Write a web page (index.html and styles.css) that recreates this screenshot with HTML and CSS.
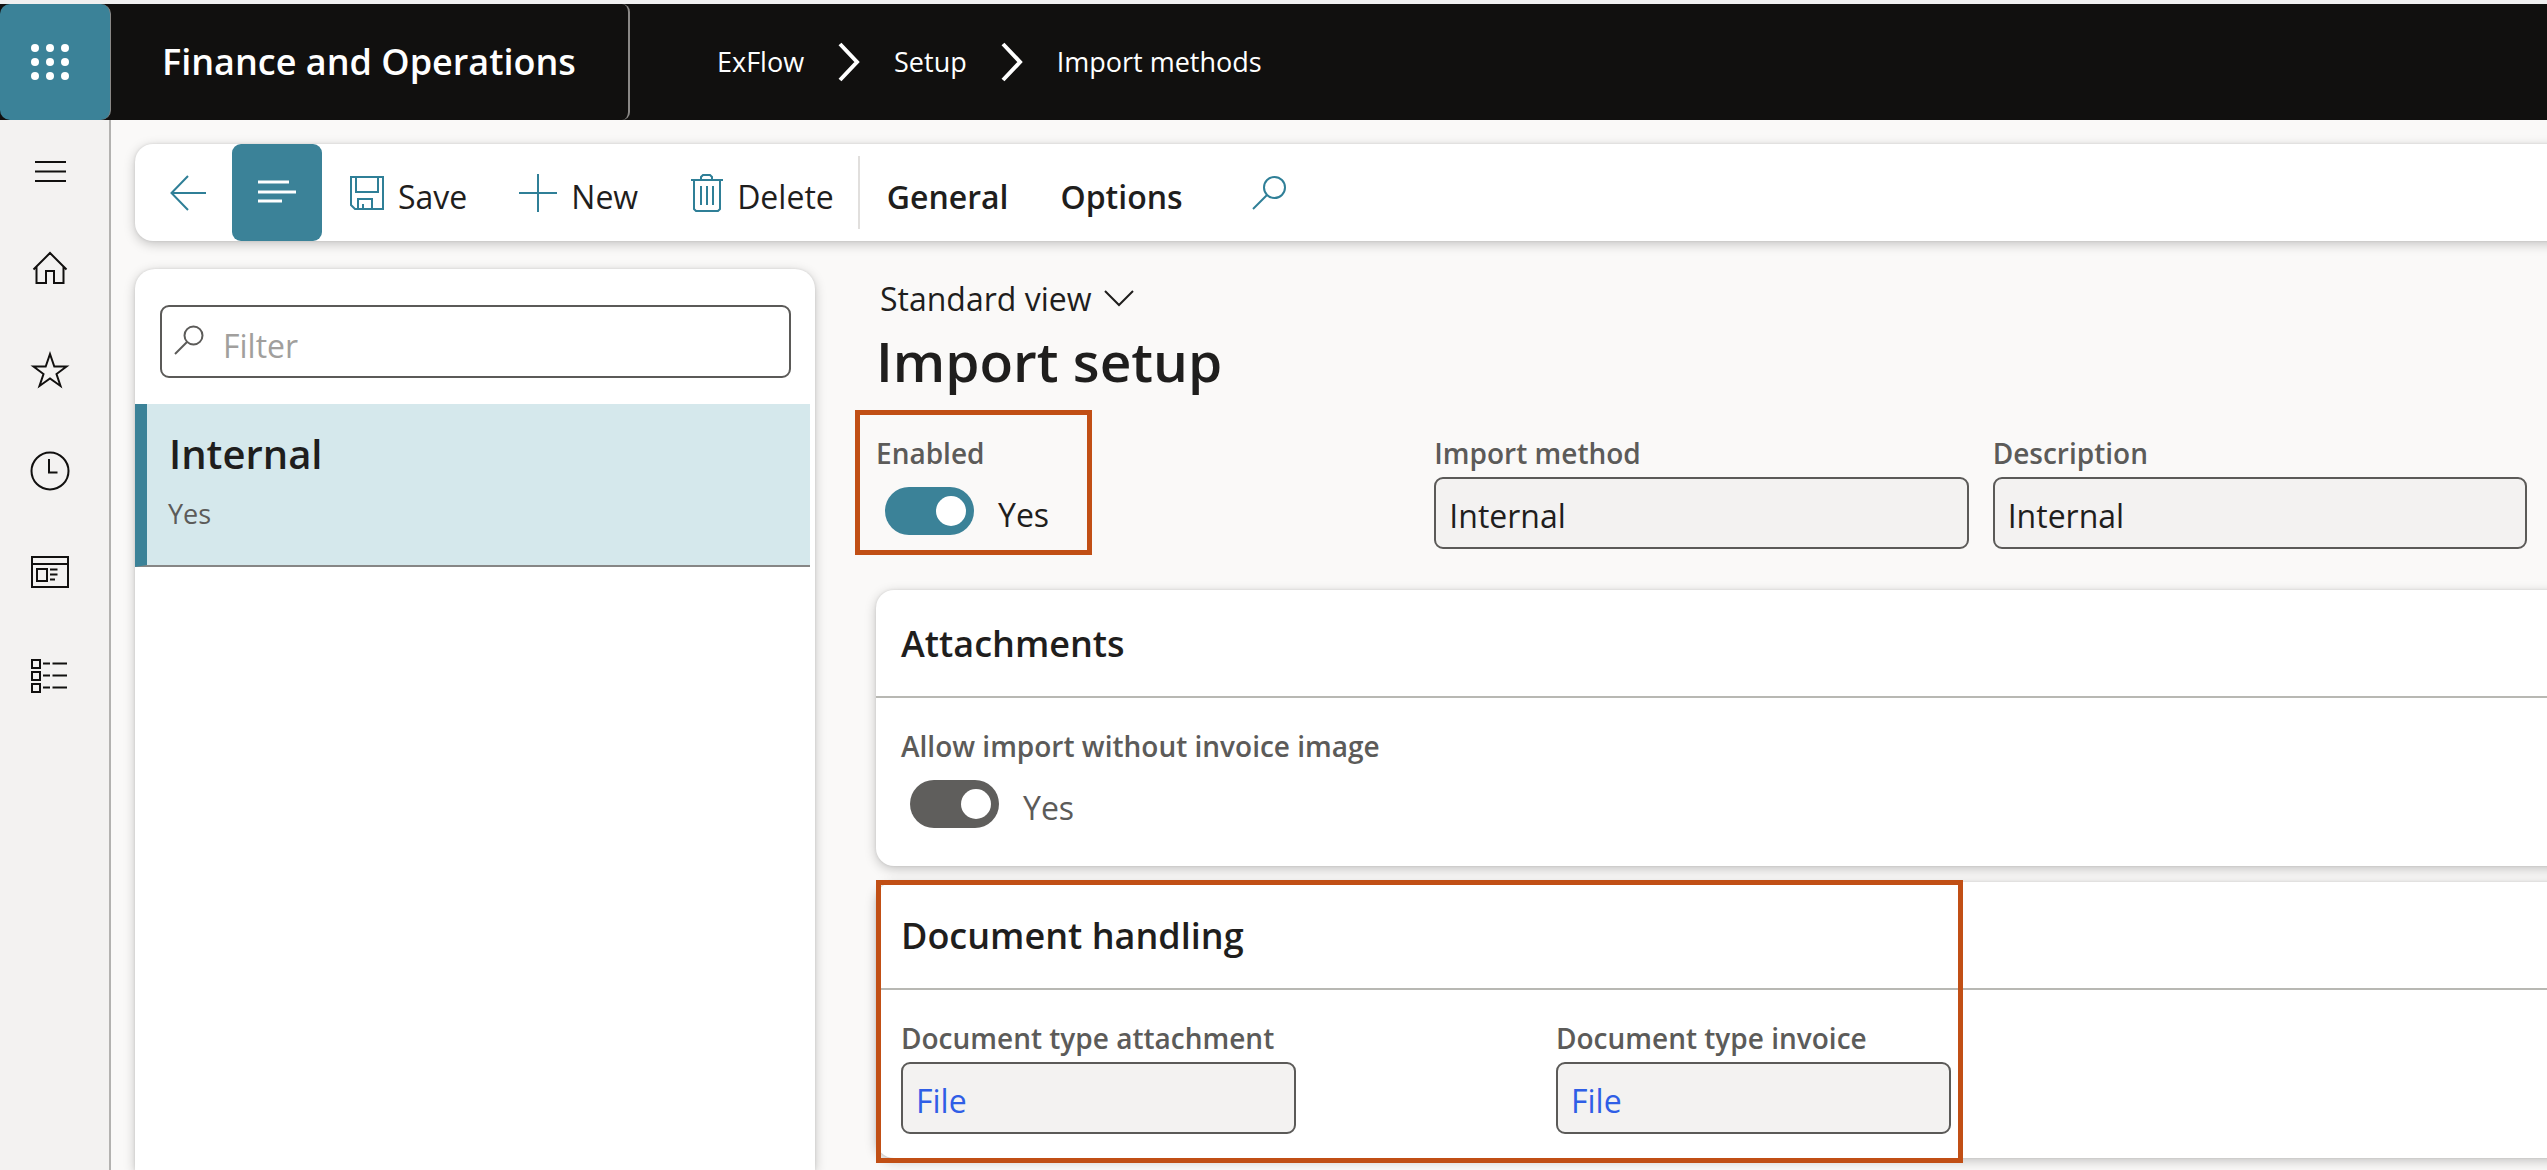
FILE: index.html
```html
<!DOCTYPE html>
<html lang="en">
<head>
<meta charset="utf-8">
<title>Import setup - Finance and Operations</title>
<link rel="stylesheet" href="styles.css">
</head>
<body>
<header class="topbar">
  <button class="waffle" aria-label="App launcher">
    <svg width="38" height="38" viewBox="0 0 38 38" fill="#fff"><circle cx="4" cy="5" r="4"/><circle cx="19" cy="5" r="4"/><circle cx="34" cy="5" r="4"/><circle cx="4" cy="19" r="4"/><circle cx="19" cy="19" r="4"/><circle cx="34" cy="19" r="4"/><circle cx="4" cy="33" r="4"/><circle cx="19" cy="33" r="4"/><circle cx="34" cy="33" r="4"/></svg>
  </button>
  <a class="product" href="#">Finance and Operations</a>
  <nav class="crumbs" aria-label="Breadcrumb">
    <a href="#">ExFlow</a>
    <svg width="22" height="38" viewBox="0 0 22 38"><path d="M2 1 19 19 2 37" fill="none" stroke="#fff" stroke-width="4"/></svg>
    <a href="#">Setup</a>
    <svg width="22" height="38" viewBox="0 0 22 38"><path d="M2 1 19 19 2 37" fill="none" stroke="#fff" stroke-width="4"/></svg>
    <a href="#">Import methods</a>
  </nav>
</header>
<div class="shell">
  <nav class="rail" aria-label="Main">
    <button aria-label="Expand navigation"><svg width="40" height="40" viewBox="0 0 40 40"><path d="M5 14H36M5 23.500H36M5 33H36"/></svg></button>
    <button aria-label="Home"><svg width="40" height="40" viewBox="0 0 40 40"><path d="M3.500 20.500 20 4 36.500 20.500M6.500 18V34H16V22H24V34H33.500V18"/></svg></button>
    <button aria-label="Favorites"><svg width="40" height="40" viewBox="0 0 40 40"><path d="M20 4 24.300 16.500 36.500 16.500 26.500 24 30.500 36 20 28.500 9.500 36 13.500 24 3.500 16.500 15.700 16.500Z"/></svg></button>
    <button aria-label="Recent"><svg width="40" height="40" viewBox="0 0 40 40"><circle cx="20" cy="20" r="18.500"/><path d="M19 8V21.500H27.500"/></svg></button>
    <button aria-label="Workspaces"><svg width="40" height="40" viewBox="0 0 40 40"><path d="M2 5H38V35H2ZM2 12H38M7 17H17V29H7ZM20 17.500H27.500M20 22.500H27.500M20 27.500H25"/></svg></button>
    <button aria-label="Modules"><svg width="40" height="40" viewBox="0 0 40 40"><path d="M2 7H10V15H2ZM2 19H10V27H2ZM2 31H10V39H2ZM13 10.500H20M22.500 10.500H37M13 22.500H20M22.500 22.500H37M13 34.500H20M22.500 34.500H37"/></svg></button>
  </nav>
  <div class="workspace">
    <div class="toolbar" role="toolbar" aria-label="Actions">
      <button class="back" aria-label="Back"><svg width="40" height="40" viewBox="0 0 40 40"><path d="M38 20H4M20 3 3.500 20 20 37"/></svg></button>
      <button class="list-toggle" aria-label="Show list"><svg width="40" height="40" viewBox="0 0 40 40"><path d="M4 9H35M4 19H42M4 28H28"/></svg></button>
      <button class="action save"><svg width="36" height="38" viewBox="0 0 36 38"><path d="M2 3H34V35H6L2 31ZM7 3V18H29V3M9 35V25H23V35M14 30V35"/></svg><span>Save</span></button>
      <button class="action new"><svg width="40" height="40" viewBox="0 0 40 40"><path d="M20 1V39M1 20H39"/></svg><span>New</span></button>
      <button class="action delete"><svg width="34" height="40" viewBox="0 0 34 40"><path d="M1 7H33M4 7V36L6 38H28L30 36V7M11 7V4L13 2H20L22 4V7M11 13V32M17 13V32M23 13V32"/></svg><span>Delete</span></button>
      <button class="tab">General</button>
      <button class="tab">Options</button>
      <button class="find" aria-label="Search"><svg width="36" height="36" viewBox="0 0 36 36"><circle cx="23.500" cy="12.500" r="10.500"/><path d="M16 20 2 34"/></svg></button>
    </div>
    <div class="columns">
      <aside class="list">
        <div class="filter">
          <svg width="30" height="30" viewBox="0 0 30 30"><circle cx="19.500" cy="10.500" r="9"/><path d="M13 17 1 29"/></svg>
          <input type="text" placeholder="Filter" aria-label="Filter">
        </div>
        <a class="record" href="#">
          <strong>Internal</strong>
          <span>Yes</span>
        </a>
      </aside>
      <main class="detail">
        <button class="view">Standard view <svg width="30" height="18" viewBox="0 0 30 18"><path d="M1 1 15 15 29 1"/></svg></button>
        <h1>Import setup</h1>
        <div class="summary">
          <div class="field">
            <label for="enabled">Enabled</label>
            <div class="switch"><input type="checkbox" role="switch" id="enabled" checked><span>Yes</span></div>
            <div class="callout callout-enabled"></div>
          </div>
          <div class="field">
            <label for="method">Import method</label>
            <input class="box" type="text" id="method" value="Internal" readonly>
          </div>
          <div class="field">
            <label for="description">Description</label>
            <input class="box" type="text" id="description" value="Internal" readonly>
          </div>
        </div>
        <section class="card">
          <h2>Attachments</h2>
          <div class="card-body">
            <div class="field">
              <label for="allow">Allow import without invoice image</label>
              <div class="switch"><input type="checkbox" role="switch" id="allow" checked disabled><span>Yes</span></div>
            </div>
          </div>
        </section>
        <section class="card">
          <h2>Document handling</h2>
          <div class="card-body">
            <div class="field">
              <label for="type-attachment">Document type attachment</label>
              <input class="box link" type="text" id="type-attachment" value="File" readonly>
            </div>
            <div class="field">
              <label for="type-invoice">Document type invoice</label>
              <input class="box link" type="text" id="type-invoice" value="File" readonly>
            </div>
          </div>
          <div class="callout callout-documents"></div>
        </section>
      </main>
    </div>
  </div>
</div>
</body>
</html>
```
FILE: styles.css
```css
:root {
  --teal: #3b8298;
  --ink: #1f1e1d;
  --muted: #5c5b59;
  --shadow: 0 3px 12px rgba(0, 0, 0, .22), 0 0 3px rgba(0, 0, 0, .1);
}

* { box-sizing: border-box; }

body {
  margin: 0;
  min-height: 100vh;
  display: flex;
  flex-direction: column;
  border-top: 4px solid #f0f0f0;
  background: #faf9f8;
  color: var(--ink);
  font: 32px/40px "Open Sans", "Noto Sans", sans-serif;
}

button, input { font: inherit; color: inherit; }
button { margin: 0; padding: 0; border: 0; background: none; }
a { color: inherit; text-decoration: none; }
h1, h2 { margin: 0; font-weight: 600; }
svg { flex: none; overflow: visible; }

/* Top bar */
.topbar {
  display: flex;
  height: 116px;
  background: #11100f;
  color: #fff;
}
.waffle {
  width: 111px;
  display: grid;
  place-items: center;
  padding-right: 10px;
  background: var(--teal);
  border-right: 1px solid #8a8886;
  border-radius: 10px;
}
.product {
  display: flex;
  align-items: center;
  width: 519px;
  padding-left: 51px;
  border-right: 2px solid #8a8886;
  border-radius: 0 8px 8px 0;
  font-size: 36px;
  font-weight: 600;
  white-space: nowrap;
}
.crumbs {
  display: flex;
  align-items: center;
  gap: 34px;
  padding-left: 87px;
  font-size: 27px;
}

/* Left rail */
.shell { flex: 1; display: flex; }
.rail {
  width: 111px;
  display: flex;
  flex-direction: column;
  align-items: center;
  gap: 61px;
  padding: 28px 9px 0 0;
  background: #f3f2f1;
  border-right: 2px solid #b3b2b0;
}
.rail button { height: 40px; }
.rail svg { display: block; fill: none; stroke: #11100f; stroke-width: 2; }

/* Toolbar */
.workspace {
  flex: 1;
  min-width: 0;
  display: flex;
  flex-direction: column;
  gap: 28px;
  padding: 24px 0 0 24px;
  overflow-x: clip;
}
.toolbar {
  display: flex;
  align-items: center;
  height: 97px;
  margin-right: -24px;
  background: #fff;
  border-radius: 18px;
  box-shadow: var(--shadow);
}
.toolbar svg { fill: none; stroke: #2f7f97; stroke-width: 2; }
.back { width: 97px; padding-left: 8px; }
.back svg, .list-toggle svg, .find svg { display: block; margin: 0 auto; }
.list-toggle {
  width: 90px;
  height: 97px;
  padding-right: 6px;
  background: var(--teal);
  border-radius: 9px;
}
.toolbar .list-toggle svg { stroke: #fff; stroke-width: 3; }
.action { display: flex; align-items: center; gap: 13px; }
.action span, .tab { padding-top: 8px; }
.save { margin-left: 27px; }
.new { margin-left: 51px; }
.delete {
  height: 73px;
  margin-left: 52px;
  padding-right: 24px;
  border-right: 2px solid #e1dfdd;
}
.tab { margin-left: 27px; font-weight: 600; }
.tab + .tab { margin-left: 52px; }
.find { margin-left: 68px; }

/* Record list */
.columns { flex: 1; display: flex; gap: 61px; }
.list {
  width: 680px;
  padding-top: 36px;
  background: #fff;
  border-radius: 20px 20px 0 0;
  box-shadow: var(--shadow);
}
.filter {
  display: flex;
  align-items: center;
  gap: 19px;
  height: 73px;
  margin: 0 24px 26px 25px;
  padding: 0 12px;
  border: 2px solid #5b5a58;
  border-radius: 9px;
}
.filter svg { margin-bottom: 4px; fill: none; stroke: var(--muted); stroke-width: 2; }
.filter input {
  flex: 1;
  min-width: 0;
  height: 60px;
  padding: 8px 0 0;
  border: 0;
  outline: 0;
  background: none;
}
.filter input::placeholder { color: #a19f9d; opacity: 1; }
.record {
  display: flex;
  flex-direction: column;
  gap: 14px;
  height: 163px;
  margin-right: 5px;
  padding: 22px 21px 0;
  background: #d5e8ec;
  border-left: 12px solid var(--teal);
  border-bottom: 2px solid #868685;
}
.record strong { padding-left: 1px; font-size: 40px; line-height: 56px; font-weight: 600; }
.record span { color: var(--muted); font-size: 27px; line-height: 36px; }

/* Record detail */
.detail { flex: 1; min-width: 0; padding: 10px 0 12px; }
.view { display: flex; align-items: center; gap: 12px; margin: 0 0 6px 4px; }
.view svg { fill: none; stroke: var(--ink); stroke-width: 2; }
h1 { font-size: 55px; line-height: 72px; }
.summary {
  display: grid;
  grid-template-columns: repeat(3, 1fr);
  gap: 24px;
  margin: 38px 20px 41px 0;
}
.field {
  position: relative;
  display: flex;
  flex-direction: column;
  gap: 6px;
  min-width: 0;
}
.field label {
  color: var(--muted);
  font-size: 28px;
  line-height: 36px;
  font-weight: 600;
  white-space: nowrap;
}
.box {
  width: 100%;
  height: 72px;
  padding: 4px 13px 0;
  background: #f3f2f1;
  border: 2px solid #5b5a58;
  border-radius: 9px;
  outline: 0;
}
.link { color: #2f5ee6; }
.switch {
  display: flex;
  align-items: center;
  gap: 24px;
  height: 72px;
  padding: 0 0 5px 9px;
}
.switch input {
  appearance: none;
  display: flex;
  align-items: center;
  justify-content: flex-end;
  width: 89px;
  height: 48px;
  margin: 0;
  padding-right: 8px;
  background: var(--teal);
  border-radius: 24px;
}
.switch input::before {
  content: "";
  width: 30px;
  height: 30px;
  background: #fff;
  border-radius: 50%;
}
.switch input:disabled { background: #5f5e5c; }
.switch input:disabled + span { color: var(--muted); }
.switch span { padding-top: 9px; }

.card {
  position: relative;
  margin: 0 -24px 16px 0;
  background: #fff;
  border-radius: 18px;
  box-shadow: var(--shadow);
}
.card:last-child { margin-bottom: 0; }
.card h2 {
  padding: 2px 25px 0;
  border-bottom: 2px solid #b8b8b3;
  font-size: 36px;
  line-height: 104px;
}
.card-body {
  display: grid;
  grid-template-columns: repeat(auto-fill, 395px);
  column-gap: 260px;
  padding: 30px 25px 24px;
}

/* Highlight frames drawn over the form */
.callout {
  position: absolute;
  border: 5px solid #c14f15;
  pointer-events: none;
}
.callout-enabled { top: -25px; left: -21px; width: 237px; height: 145px; }
.callout-documents { top: -2px; left: 0; width: 1087px; bottom: -5px; }
```
